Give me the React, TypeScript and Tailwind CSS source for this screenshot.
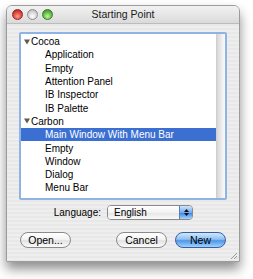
import React from 'react';

type Row = { label: string; group?: boolean; selected?: boolean };

const rows: Row[] = [
  { label: 'Cocoa', group: true },
  { label: 'Application' },
  { label: 'Empty' },
  { label: 'Attention Panel' },
  { label: 'IB Inspector' },
  { label: 'IB Palette' },
  { label: 'Carbon', group: true },
  { label: 'Main Window With Menu Bar', selected: true },
  { label: 'Empty' },
  { label: 'Window' },
  { label: 'Dialog' },
  { label: 'Menu Bar' },
];

function Light({ color }: { color: 'red' | 'gray' | 'green' }) {
  const fill =
    color === 'red'
      ? 'bg-[radial-gradient(circle_at_50%_70%,#ff9a8c_0%,#e0443a_55%,#a51d14_100%)] border-[#8c2a22]'
      : color === 'green'
      ? 'bg-[radial-gradient(circle_at_50%_70%,#c3f3a6_0%,#5dbb3f_55%,#2e7d1d_100%)] border-[#3f7a2c]'
      : 'bg-[radial-gradient(circle_at_50%_70%,#ffffff_0%,#d6d6d6_55%,#a9a9a9_100%)] border-[#8f8f8f]';
  return <div className={`w-[11px] h-[11px] rounded-full border ${fill}`} />;
}

function AquaButton({ label, primary }: { label: string; primary?: boolean }) {
  return (
    <button
      className={
        primary
          ? 'w-[51px] h-[16px] rounded-full border border-[#3a5fa0] bg-[linear-gradient(180deg,#d2e8fc_0%,#8ec0f2_45%,#4f96e6_55%,#9fd2ff_100%)] text-[10.5px] leading-none text-black'
          : 'w-[51px] h-[16px] rounded-full border border-[#8a8a8a] bg-[linear-gradient(180deg,#ffffff_0%,#f4f4f4_45%,#e2e2e2_55%,#fbfbfb_100%)] text-[10.5px] leading-none text-black'
      }
    >
      {label}
    </button>
  );
}

export default function App() {
  return (
    <div className="w-[253px] h-[279px] bg-white pt-[5px] pl-[6px] font-['Liberation_Sans',Arial,sans-serif]">
      <div className="w-[234px] h-[257px] rounded-t-[6px] border border-[#9c9c9c] shadow-[0_7px_12px_rgba(0,0,0,0.45)] overflow-hidden flex flex-col bg-[repeating-linear-gradient(180deg,#eeeeee_0px,#eeeeee_2px,#e8e8e8_2px,#e8e8e8_4px)]">
        {/* title bar */}
        <div className="relative h-[18px] flex items-center bg-[linear-gradient(180deg,#f2f2f2,#dadada)] border-b border-[#bcbcbc]">
          <div className="flex gap-[4px] pl-[5px]">
            <Light color="red" />
            <Light color="gray" />
            <Light color="green" />
          </div>
          <div className="absolute inset-0 flex items-center justify-center text-[10.5px] text-[#1a1a1a]">
            Starting Point
          </div>
        </div>

        {/* list */}
        <div className="mt-[8px] ml-[12px] w-[208px] h-[168px] border-2 border-[#8fb4e4] rounded-[2px] bg-white flex">
          <div className="flex-1 pt-[1px] text-[10px] text-black">
            {rows.map((r, i) => (
              <div
                key={i}
                className={`h-[13.3px] flex items-center ${r.selected ? 'bg-[#3b6fd2] text-white' : ''} ${r.group ? 'pl-[3px]' : 'pl-[24px]'}`}
              >
                {r.group && (
                  <svg width="6" height="6" viewBox="0 0 6 6" className="mr-[1px]">
                    <path d="M0 0.5 H6 L3 5.5 Z" fill="#5a5a5a" />
                  </svg>
                )}
                {r.label}
              </div>
            ))}
          </div>
          <div className="w-[9px] bg-[linear-gradient(90deg,#d6d6d6,#eeeeee_60%,#fafafa)] border-l border-[#cfcfcf]" />
        </div>

        {/* language */}
        <div className="mt-[5px] flex items-center gap-[6px] text-[10px] text-black">
          <span className="w-[94px] text-right">Language:</span>
          <div className="w-[86px] h-[15px] flex rounded-[4px] border border-[#8a8a8a] overflow-hidden bg-white">
            <div className="flex-1 pl-[6px] flex items-center bg-[linear-gradient(180deg,#ffffff,#f2f2f2_50%,#e6e6e6_55%,#fafafa)]">English</div>
            <div className="w-[13px] flex flex-col items-center justify-center gap-[1px] bg-[linear-gradient(180deg,#cfe4fb,#6faaf0_50%,#3d86e0_55%,#a8d4ff)] border-l border-[#5a7fb5]">
              <svg width="5" height="3" viewBox="0 0 5 3">
                <path d="M2.5 0 L5 3 H0 Z" fill="#111" />
              </svg>
              <svg width="5" height="3" viewBox="0 0 5 3">
                <path d="M0 0 H5 L2.5 3 Z" fill="#111" />
              </svg>
            </div>
          </div>
        </div>

        {/* buttons */}
        <div className="mt-[12px] flex items-center px-[13px]">
          <AquaButton label="Open..." />
          <div className="flex-1" />
          <div className="flex gap-[8px]">
            <AquaButton label="Cancel" />
            <AquaButton label="New" primary />
          </div>
        </div>

        <div className="flex-1 flex items-end justify-end pr-[1px] pb-[1px]">
          <svg width="8" height="8" viewBox="0 0 8 8">
            <path d="M7 1 L1 7 M7 4 L4 7 M7 6.5 L6.5 7" stroke="#9a9a9a" strokeWidth="1" />
          </svg>
        </div>
      </div>
    </div>
  );
}
